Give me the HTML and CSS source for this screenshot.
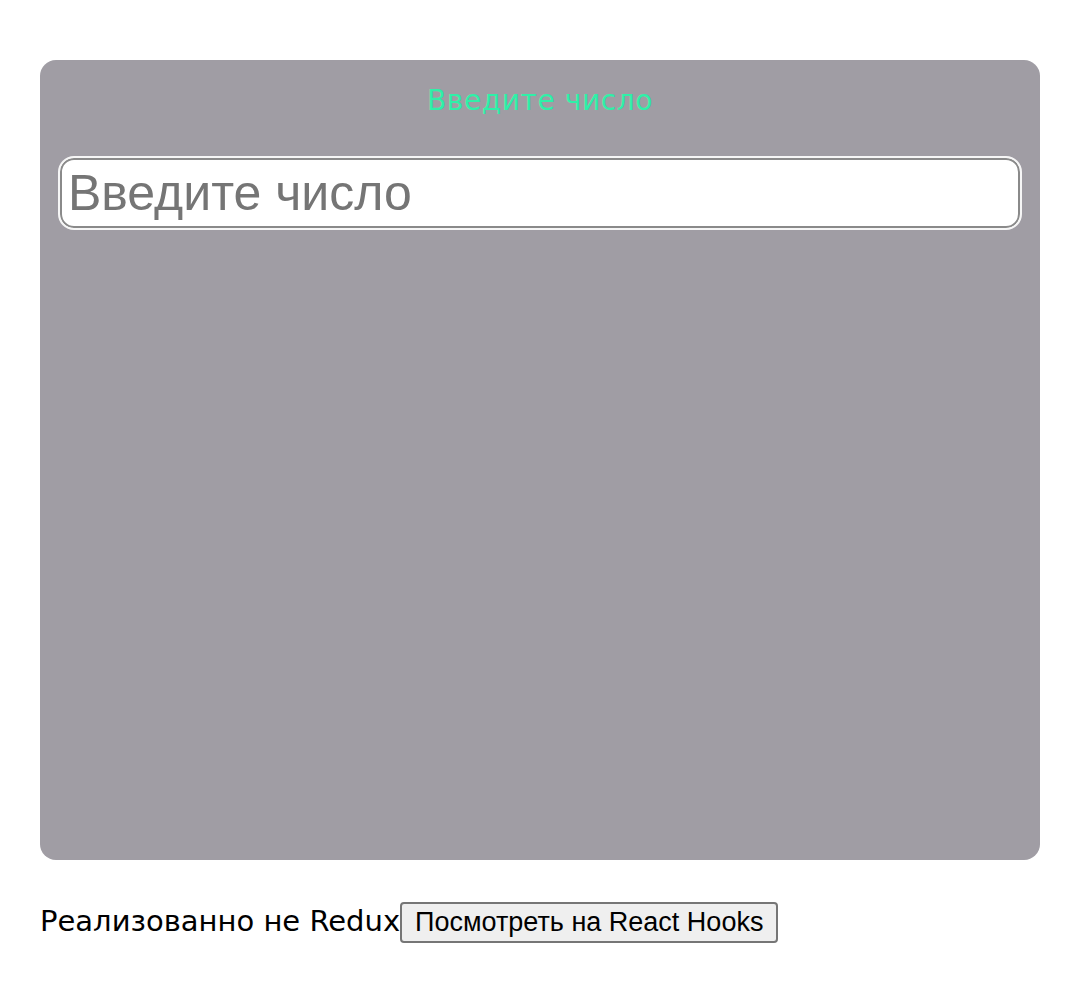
FILE: index.html
```html
<!DOCTYPE html>
<html lang="ru">
<head>
<meta charset="utf-8">
<link rel="stylesheet" href="styles.css">
</head>
<body>
<div class="page">
  <div class="card">
    <div class="title">Введите число</div>
    <input class="field" type="text" placeholder="Введите число" autofocus>
  </div>
  <div class="footer"><span class="note">Реализованно не Redux</span><button class="btn">Посмотреть на React Hooks</button></div>
</div>
</body>
</html>
```
FILE: styles.css
```css
html, body {
  margin: 0;
  padding: 0;
  background: #fff;
}
.page {
  padding: 60px 40px 0 40px;
}
.card {
  width: 1000px;
  height: 800px;
  box-sizing: border-box;
  background: #a09da4;
  border-radius: 16px;
  padding: 22px 18px 0 18px;
  display: flex;
  flex-direction: column;
}
.title {
  text-align: center;
  color: #2ff0a8;
  font-family: "DejaVu Sans", sans-serif;
  font-size: 28px;
  letter-spacing: 0.6px;
  line-height: 38px;
}
.field {
  margin-top: 36px;
  width: 964px;
  height: 74px;
  box-sizing: border-box;
  border: 2px solid #f6f6f6;
  box-shadow: inset 0 0 0 2px #8a8a8a, inset 0 0 0 3px #fff;
  border-radius: 16px;
  background: #fff;
  font-family: "Liberation Sans", Arial, sans-serif;
  font-size: 50px;
  padding: 0 8px;
  color: #000;
  outline: none;
  caret-color: #000;
}
.field::placeholder {
  color: #757575;
}
.footer {
  margin-top: 42px;
  display: flex;
  align-items: center;
}
.note {
  font-family: "DejaVu Sans", sans-serif;
  font-size: 29px;
  color: #000;
  margin-top: -4px;
}
.btn {
  font-family: "Liberation Sans", Arial, sans-serif;
  font-size: 27px;
  height: 41px;
  padding: 0 13px;
  background: #efefef;
  border: 2px solid #767676;
  border-radius: 4px;
  color: #000;
}
```
